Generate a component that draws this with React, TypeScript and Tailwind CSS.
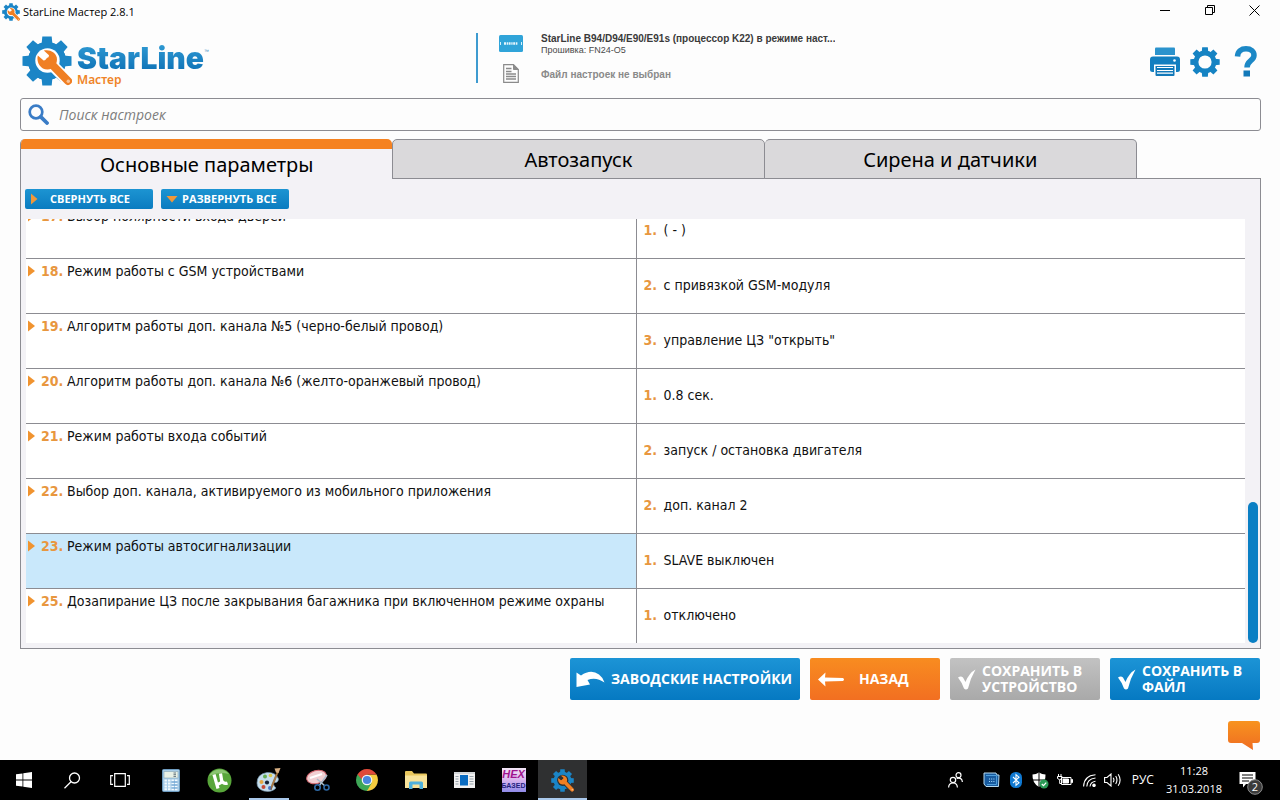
import React from 'react';

const TABS = ['Основные параметры', 'Автозапуск', 'Сирена и датчики'];

type Setting = { id: number; name: string; option: number; value: string; selected?: boolean };

const SETTINGS: Setting[] = [
  { id: 17, name: 'Выбор полярности входа дверей', option: 1, value: '( - )' },
  { id: 18, name: 'Режим работы с GSM устройствами', option: 2, value: 'с привязкой GSM-модуля' },
  { id: 19, name: 'Алгоритм работы доп. канала №5 (черно-белый провод)', option: 3, value: 'управление ЦЗ "открыть"' },
  { id: 20, name: 'Алгоритм работы доп. канала №6 (желто-оранжевый провод)', option: 1, value: '0.8 сек.' },
  { id: 21, name: 'Режим работы входа событий', option: 2, value: 'запуск / остановка двигателя' },
  { id: 22, name: 'Выбор доп. канала, активируемого из мобильного приложения', option: 2, value: 'доп. канал 2' },
  { id: 23, name: 'Режим работы автосигнализации', option: 1, value: 'SLAVE выключен', selected: true },
  { id: 25, name: 'Дозапирание ЦЗ после закрывания багажника при включенном режиме охраны', option: 1, value: 'отключено' },
];

const TEETH = [0, 45, 90, 135, 180, 225, 270, 315];

function GearShape({ fill, hole }: { fill: string; hole: number }) {
  const ring = (19 + hole) / 2;
  return (
    <g>
      <circle cx="25" cy="25" r={ring} fill="none" stroke={fill} strokeWidth={19 - hole} />
      {TEETH.map((a) => (
        <path key={a} d="M19.5 9 L20.3 0.5 H29.7 L30.5 9 Z" fill={fill} transform={`rotate(${a} 25 25)`} />
      ))}
    </g>
  );
}

function LogoGear({ className, backing }: { className: string; backing: string }) {
  return (
    <svg viewBox="0 0 50 50" className={className} aria-hidden="true">
      <defs>
        <linearGradient id="logoBlue" x1="0" y1="0" x2="0" y2="50" gradientUnits="userSpaceOnUse">
          <stop offset="0" stopColor="#2f9ad3" />
          <stop offset="1" stopColor="#0a70b5" />
        </linearGradient>
      </defs>
      <circle cx="25" cy="25" r="19" fill="#1b85c6" />
      <GearShape fill="#1b85c6" hole={11} />
      <circle cx="25.5" cy="24.5" r="12.2" fill={backing} />
      <path d="M30 29 L47 46" stroke={backing} strokeWidth="11.5" strokeLinecap="round" />
      <path d="M27 25.5 L46 45" stroke="#f07f23" strokeWidth="8" strokeLinecap="round" />
      <path
        d="M15.8 19.5 L21.6 24.6 L26 23.6 L27 19.2 L21.8 14.6 C27.5 13 33.5 16.2 34.8 21.5 C36 27.5 31.5 33.6 25.4 33.6 C19 33.6 14 27 15.8 19.5 Z"
        fill="#f07f23"
      />
      <circle cx="46.3" cy="45.3" r="1.7" fill="#f9c396" />
    </svg>
  );
}

function TitleBar() {
  return (
    <header className="flex h-6 shrink-0 items-center pr-[3px] pl-[2px]">
      <LogoGear className="size-[18px]" backing="#ffffff" />
      <h1 className="ml-[3px] font-['Open_Sans',sans-serif] text-[11px] text-black">StarLine Мастер 2.8.1</h1>
      <div className="ml-auto flex h-full text-black">
        <button type="button" aria-label="Свернуть" className="flex w-[45px] items-center justify-center pb-1">
          <svg width="10" height="10" viewBox="0 0 10 10"><path d="M0 5.5H10" stroke="currentColor" /></svg>
        </button>
        <button type="button" aria-label="Восстановить" className="flex w-[45px] items-center justify-center pb-1">
          <svg width="10" height="10" viewBox="0 0 10 10" fill="none" stroke="currentColor">
            <path d="M0.5 2.5H7.5V9.5H0.5ZM2.5 2.5V0.5H9.5V7.5H7.5" />
          </svg>
        </button>
        <button type="button" aria-label="Закрыть" className="flex w-[45px] items-center justify-center pb-1">
          <svg width="11" height="11" viewBox="0 0 11 11"><path d="M0.5 0.5L10.5 10.5M10.5 0.5L0.5 10.5" stroke="currentColor" /></svg>
        </button>
      </div>
    </header>
  );
}

function AppHeader() {
  return (
    <div className="flex h-[74px] shrink-0 items-start pr-[22px] pl-[22px]">
      <div className="flex w-[454px] shrink-0 items-start pt-3">
        <LogoGear className="size-[50px]" backing="#ffffff" />
        <div className="ml-[5px] pt-2">
          <div className="flex items-start">
            <span className="bg-linear-to-b from-[#2f9ad3] to-[#0a70b5] bg-clip-text font-[Inter,sans-serif] text-[30px] leading-[29px] font-black text-transparent">
              StarLine
            </span>
            <span className="font-['Liberation_Sans',sans-serif] text-[5px] leading-[14px] text-[#2f86bd]">™</span>
          </div>
          <div className="font-['Noto_Sans',sans-serif] text-xs leading-[14px] font-semibold text-[#ef8428]">Мастер</div>
        </div>
      </div>
      <div className="mt-[9px] flex h-[50px] min-w-0 border-l-2 border-[#3e9bd0] pl-[21px] font-['Liberation_Sans',sans-serif] text-[10px]">
        <div className="flex w-[42px] shrink-0 flex-col pt-[2px]">
          <svg width="24" height="17" viewBox="0 0 24 17" aria-hidden="true">
            <rect width="24" height="17" rx="1.5" fill="#30a4d9" />
            <path d="M1.500 7V10M22.500 7V10" stroke="#d9f1fb" />
            <path d="M5 8.500H19" stroke="#e6f6fd" strokeWidth="2.400" strokeDasharray="2 0.700 1.300 0.600" />
          </svg>
          <svg width="16" height="19" viewBox="0 0 16 19" className="mt-3 ml-1" fill="none" stroke="#8b8b8b" aria-hidden="true">
            <path d="M0.700 0.700H10.500L15.300 5.500V18.300H0.700Z" strokeWidth="1.200" />
            <path d="M10.500 0.700V5.500H15.300Z" fill="#8b8b8b" />
            <path d="M3 4.500H8.500M3 7.500H8.500M3 10H13M3 12.500H13M3 15H13" strokeWidth="1.300" />
          </svg>
        </div>
        <div className="min-w-0">
          <p className="truncate leading-3 font-bold text-[#3a3a3a]">StarLine B94/D94/E90/E91s (процессор K22) в режиме наст...</p>
          <p className="text-[9px] leading-[10px] text-[#4a4a4a]">Прошивка: FN24-O5</p>
          <p className="mt-[14px] leading-3 font-bold text-[#8a8a8a]">Файл настроек не выбран</p>
        </div>
      </div>
      <div className="ml-auto flex gap-[10px] pt-[22px]">
        <button type="button" aria-label="Печать">
          <svg width="30" height="30" viewBox="0 0 30 30" aria-hidden="true">
            <path d="M5 1.500Q5 0.500 6 0.500H24Q25 0.500 25 1.500V8H5Z" fill="#2b93cd" />
            <path d="M3 9.500H27Q30 9.500 30 12.500V22.500Q30 25 27.500 25H26V17.500H4V25H2.500Q0 25 0 22.500V12.500Q0 9.500 3 9.500Z" fill="#137fc0" />
            <path d="M5.500 19H24.500V28Q24.500 29 23.500 29H6.500Q5.500 29 5.500 28Z" fill="#1279b9" />
            <path d="M7 20.500H23M7 23.500H23M7 26.200H23" stroke="#fff" strokeWidth="1.200" />
            <circle cx="24.500" cy="13.500" r="1.300" fill="#fff" />
          </svg>
        </button>
        <button type="button" aria-label="Настройки">
          <svg width="30" height="30" viewBox="0 0 50 50" aria-hidden="true">
            <GearShape fill="#1583c3" hole={11} />
          </svg>
        </button>
        <button type="button" aria-label="Справка" className="ml-1">
          <svg width="24" height="31" viewBox="0 0 24 31" aria-hidden="true">
            <path d="M3.500 10.500C3.800 5 7.500 2.800 12 2.800C17 2.800 20 5.500 20 9.200C20 15 13 14.500 13 21.500" fill="none" stroke="#1c88c6" strokeWidth="5.500" />
            <rect x="9.500" y="24.500" width="6.500" height="6" fill="#1279b9" />
          </svg>
        </button>
      </div>
    </div>
  );
}

function SearchBox() {
  return (
    <div className="flex h-[33px] shrink-0 items-center rounded-[3px] border border-[#8c8c92] pl-[7px]">
      <label htmlFor="settings-search" aria-label="Поиск настроек">
        <svg width="21" height="21" viewBox="0 0 21 21" fill="none" stroke="#3a7cc6" aria-hidden="true">
          <circle cx="8" cy="8" r="6.300" strokeWidth="2.700" />
          <path d="M12.800 12.800L19 19" strokeWidth="3.800" strokeLinecap="round" />
        </svg>
      </label>
      <input
        id="settings-search"
        type="text"
        placeholder="Поиск настроек"
        className="ml-[10px] h-full flex-1 bg-transparent font-['Open_Sans',sans-serif] text-sm italic outline-none placeholder:text-[#7d7d7d]"
      />
    </div>
  );
}

function Tabs() {
  return (
    <div role="tablist" className="relative z-10 -mb-px flex h-10 shrink-0 font-['Noto_Sans',sans-serif] text-xl text-black">
      {TABS.map((tab, i) =>
        i === 0 ? (
          <button key={tab} type="button" role="tab" aria-selected="true" className="flex w-[30%] flex-col overflow-hidden rounded-t-[5px] border-l border-[#8c8c92] bg-[#f3f2f6]">
            <span className="h-[10px] w-full shrink-0 bg-[#f58220]" />
            <span className="w-full leading-8">{tab}</span>
          </button>
        ) : (
          <button
            key={tab}
            type="button"
            role="tab"
            aria-selected="false"
            className={`w-[30%] rounded-t-[5px] border border-[#8c8c92] bg-[#dad9db] pt-px ${i === 2 ? 'border-l-0' : ''}`}
          >
            {tab}
          </button>
        ),
      )}
    </div>
  );
}

function Toolbar() {
  const button =
    "flex h-5 w-32 items-center rounded-[2px] bg-linear-to-b from-[#1c94d2] to-[#0a7cc0] pl-[5px] font-['Open_Sans',sans-serif] text-[11px] font-bold text-white";
  return (
    <div className="flex h-10 shrink-0 items-center gap-2 pl-1">
      <button type="button" className={button}>
        <svg width="8" height="12" viewBox="0 0 8 12" aria-hidden="true"><path d="M1 0.500L7.500 6L1 11.500Z" fill="#f0983a" /></svg>
        <span className="ml-3">СВЕРНУТЬ ВСЕ</span>
      </button>
      <button type="button" className={button}>
        <svg width="12" height="8" viewBox="0 0 12 8" aria-hidden="true"><path d="M0.500 1L6 7.500L11.500 1Z" fill="#f0983a" /></svg>
        <span className="ml-1">РАЗВЕРНУТЬ ВСЕ</span>
      </button>
    </div>
  );
}

function SettingsTable() {
  return (
    <div className="flex min-h-0 flex-1 pl-[5px]">
      <div className="flex min-w-0 flex-1 flex-col justify-end overflow-hidden bg-white">
        <table className="w-full shrink-0 table-fixed border-separate border-spacing-0 font-['DejaVu_Sans_Condensed','DejaVu_Sans',sans-serif] text-sm text-[#111]">
          <tbody>
            {SETTINGS.map((s, i) => {
              const line = i < SETTINGS.length - 1 ? 'h-[55px] border-b' : 'h-[54px]';
              return (
                <tr key={s.id}>
                  <td className={`${line} w-1/2 border-[#8c8c92] p-0 align-top ${s.selected ? 'bg-[#c9e8fb]' : ''}`}>
                    <div className="flex items-center pt-[2px] pl-[1px] leading-5 whitespace-nowrap">
                      <button type="button" aria-label={`Развернуть пункт ${s.id}`}>
                        <svg width="9" height="12" viewBox="0 0 9 12" aria-hidden="true"><path d="M1 0.500L8 6L1 11.500Z" fill="#f0932f" /></svg>
                      </button>
                      <b className="ml-[5px] w-[26px] text-[#e8973f]">{s.id}.</b>
                      <span>{s.name}</span>
                    </div>
                  </td>
                  <td className={`${line} border-l border-[#8c8c92] p-0 pb-[2px] pl-[7px] align-middle whitespace-nowrap`}>
                    <div className="flex items-center leading-5">
                      <b className="w-5 text-[#e8973f]">{s.option}.</b>
                      <span>{s.value}</span>
                    </div>
                  </td>
                </tr>
              );
            })}
          </tbody>
        </table>
      </div>
      <div className="flex w-[15px] shrink-0 flex-col justify-end pr-[2px] pl-[3px]">
        <div className="h-1/3 w-full rounded-[5px] bg-[#0a7fc4]" />
      </div>
    </div>
  );
}

function CheckMark() {
  return (
    <svg width="18" height="21" viewBox="0 0 18 21" className="shrink-0" aria-hidden="true">
      <path d="M0 8.500Q3 6.500 5 8.500L7.500 13Q11 4 17.500 0.500Q12.500 9 10 19.500Q8 21.500 6 19.500Q4 13.500 0 8.500Z" fill="#fff" />
    </svg>
  );
}

function Actions() {
  const base = "flex h-[42px] items-center rounded-[2px] text-left font-['Open_Sans',sans-serif] text-sm leading-4 font-bold text-white";
  const blue = 'bg-linear-to-b from-[#1c94d6] to-[#0579c2]';
  return (
    <div className="mt-[9px] flex shrink-0 justify-end gap-[10px] pr-px">
      <button type="button" className={`${base} ${blue} w-[230px] pl-[6px]`}>
        <svg width="29" height="17" viewBox="0 0 29 17" className="shrink-0" aria-hidden="true">
          <path d="M0.500 1.500L5 4.500Q15 -2.500 23 3.500Q27 6.500 28.500 11.500Q20 5.500 11.500 9L14 13.500L0.500 16Z" fill="#fff" />
        </svg>
        <span className="ml-[6px]">ЗАВОДСКИЕ НАСТРОЙКИ</span>
      </button>
      <button type="button" className={`${base} w-[130px] bg-linear-to-b from-[#f88c20] to-[#f26f21] pl-2`}>
        <svg width="27" height="15" viewBox="0 0 27 15" aria-hidden="true">
          <path d="M0 7.500L7.500 0.500L7 5.500L25 6Q27 7.500 25 9L7 9.500L7.500 14.500Z" fill="#fff" />
        </svg>
        <span className="ml-[14px]">НАЗАД</span>
      </button>
      <button type="button" disabled className={`${base} w-[150px] bg-linear-to-b from-[#c2c2c2] to-[#a9a9a9] pl-2`}>
        <CheckMark />
        <span className="ml-[6px]">СОХРАНИТЬ В УСТРОЙСТВО</span>
      </button>
      <button type="button" className={`${base} ${blue} w-[150px] pl-2`}>
        <CheckMark />
        <span className="ml-[6px]">СОХРАНИТЬ В ФАЙЛ</span>
      </button>
    </div>
  );
}

type TaskItemProps = { label: string; system?: boolean; active?: boolean; running?: boolean; children: React.ReactNode };

function TaskItem({ label, system, active, running, children }: TaskItemProps) {
  return (
    <button
      type="button"
      aria-label={label}
      className={`flex flex-col items-center ${system ? 'w-12' : 'w-[49px]'} ${active ? 'bg-[#2f3031]' : ''}`}
    >
      <span className="flex flex-1 items-center pt-[2px]">{children}</span>
      <span className={`h-[2px] ${active ? 'w-full bg-[#a9c8ea]' : running ? 'w-10 bg-[#a9c8ea]' : 'w-full'}`} />
    </button>
  );
}

function Taskbar() {
  return (
    <footer className="flex h-10 shrink-0 bg-black text-white">
      <div className="mr-[2px] flex">
        <TaskItem label="Пуск" system>
          <svg width="16" height="16" viewBox="0 0 16 16" fill="#fff"><path d="M0 2.300L6.500 1.400V7.600H0ZM7.300 1.300L16 0V7.600H7.300ZM0 8.400H6.500V14.600L0 13.700ZM7.300 8.400H16V16L7.300 14.700Z" /></svg>
        </TaskItem>
        <TaskItem label="Поиск" system>
          <svg width="17" height="17" viewBox="0 0 17 17" fill="none" stroke="#fff" strokeWidth="1.300"><circle cx="10.500" cy="6" r="5" /><path d="M7 9.800L0.500 16.300" /></svg>
        </TaskItem>
        <TaskItem label="Представление задач" system>
          <svg width="20" height="14" viewBox="0 0 20 14" fill="none" stroke="#fff" strokeWidth="1.200"><path d="M4.700 0.600H15.300V13.400H4.700ZM3 2.600H0.700V11.400H3M17 2.600H19.300V11.400H17" /></svg>
        </TaskItem>
      </div>
      <TaskItem label="Калькулятор">
        <svg width="18" height="23" viewBox="0 0 18 23">
          <rect x="0.500" y="0.500" width="17" height="22" rx="1" fill="#a9cde8" stroke="#6e9cc0" />
          <rect x="2" y="2.500" width="14" height="6.500" fill="#e9f1e6" stroke="#87a5b5" strokeWidth="0.600" />
          <path d="M11.500 4H14M11.500 5.700H14M11.500 7.400H14" stroke="#456" strokeWidth="0.800" />
          <path d="M2.500 11.500H15.500M2.500 14.500H15.500M2.500 17.500H15.500M2.500 20.300H15.500" stroke="#f4fbff" strokeWidth="1.900" strokeDasharray="2.400 1.100" />
          <path d="M9.500 13H15.500M9.500 16H15.500M9.500 19H15.500" stroke="#4d8cc5" strokeWidth="0.900" />
        </svg>
      </TaskItem>
      <TaskItem label="uTorrent">
        <svg width="25" height="25" viewBox="0 0 25 25">
          <circle cx="12.500" cy="12.500" r="12" fill="#58a63a" />
          <path d="M2 8A12 12 0 0 1 22 6Q12 3 2 8Z" fill="#8bc571" />
          <path d="M7 6.500L11 20.500M8.700 14.500Q12.500 17.500 14.800 13.500L13.500 5.500M14.500 12.500Q16.500 16.500 20.500 15" fill="none" stroke="#fff" strokeWidth="3.200" />
        </svg>
      </TaskItem>
      <TaskItem label="Paint" running>
        <svg width="25" height="25" viewBox="0 0 25 25">
          <path d="M1 15Q1 6 11 4.500Q20 4 22.500 11Q22 15 18.500 14.500Q16 16 20 20Q16 24.500 8 23Q1 21 1 15Z" fill="#c6deed" stroke="#7295ad" strokeWidth="0.700" />
          <circle cx="5.500" cy="14" r="2" fill="#e5a742" /><circle cx="9" cy="8.500" r="2" fill="#64ae54" /><circle cx="14.500" cy="7.500" r="1.800" fill="#ddc748" />
          <circle cx="7.500" cy="19" r="2" fill="#c64b37" /><circle cx="11" cy="14.500" r="2.100" fill="#142234" /><circle cx="14" cy="20" r="2" fill="#4c78c5" />
          <path d="M22.500 4L16.800 18L15 22L15.500 17.500L21 4Z" fill="#c08a49" stroke="#7f5227" strokeWidth="0.600" />
          <path d="M18.500 0.500L24.500 0L22.500 5L20 4.500Z" fill="#d9b185" />
        </svg>
      </TaskItem>
      <TaskItem label="Ножницы">
        <svg width="24" height="23" viewBox="0 0 24 23" fill="none">
          <ellipse cx="10.500" cy="8" rx="10" ry="6.500" transform="rotate(-15 10.500 8)" fill="#f1cfd2" stroke="#d66872" />
          <path d="M4 9L16 5" stroke="#fff" strokeWidth="2" />
          <path d="M21 6L13 17M11 10L19 17" stroke="#a9bdcc" strokeWidth="1.600" />
          <circle cx="11.500" cy="18.500" r="2.700" stroke="#2e69a5" strokeWidth="1.600" /><circle cx="20.500" cy="18.500" r="2.500" stroke="#2e69a5" strokeWidth="1.600" />
        </svg>
      </TaskItem>
      <TaskItem label="Google Chrome">
        <svg width="22" height="22" viewBox="0 0 22 22">
          <path d="M11 11L20.500 5.500A11 11 0 0 1 11 22Z" fill="#f6cc3f" />
          <path d="M11 11V22A11 11 0 0 1 1.500 5.500Z" fill="#3ea757" />
          <path d="M11 5.500H20.500L15.800 13.700ZM11 5.500V11H16Z" fill="#f6cc3f" />
          <path d="M6.200 13.700L11 22L15.800 13.700Z" fill="#3ea757" />
          <path d="M1.500 5.500L6.200 13.700L11 5.500Z" fill="#3ea757" />
          <path d="M1.500 5.500L6 10.500L11 5.500H20.500A11 11 0 0 0 1.500 5.500Z" fill="#e04a3a" />
          <circle cx="11" cy="11" r="5.300" fill="#f5f5f5" /><circle cx="11" cy="11" r="4.100" fill="#4a86e0" />
        </svg>
      </TaskItem>
      <TaskItem label="Проводник">
        <svg width="22" height="18" viewBox="0 0 22 18">
          <path d="M0 1Q0 0 1 0H7L9 2.500H21Q22 2.500 22 3.500V17H0Z" fill="#e9c75d" />
          <path d="M0 4.500H22V17H0Z" fill="#f8e39a" />
          <path d="M4 18V12Q4 10.500 5.500 10.500H16.500Q18 10.500 18 12V18H14.500V13.500H7.500V18Z" fill="#4fb1dc" />
        </svg>
      </TaskItem>
      <TaskItem label="Панель задач">
        <svg width="21" height="16" viewBox="0 0 21 16">
          <rect width="21" height="16" fill="#f1f1f1" /><rect x="6" y="3" width="8" height="10.500" fill="#0a6cc2" />
          <path d="M1.500 4.500H4.500M1.500 7H4.500M1.500 9.500H4.500M1.500 12H4.500M15.500 4.500H19.500M15.500 7H19.500M15.500 9.500H19.500M15.500 12H19.500" stroke="#8d9aa3" strokeWidth="0.900" />
          <path d="M0 1H21" stroke="#c8ccd0" strokeWidth="1.500" />
        </svg>
      </TaskItem>
      <TaskItem label="Hex">
        <span className="flex h-6 w-6 flex-col overflow-hidden bg-linear-to-b from-[#f3e6f7] via-[#d9b4ee] to-[#8f8ae8] text-center font-['Liberation_Sans',sans-serif] font-bold">
          <span className="text-[11px] leading-[13px] text-[#a1148e] italic">HEX</span>
          <span className="text-[7px] leading-[10px] text-[#22217e]">БАЗЕD</span>
        </span>
      </TaskItem>
      <TaskItem label="StarLine Мастер" active>
        <LogoGear className="size-[23px]" backing="#2f3031" />
      </TaskItem>
      <div className="ml-auto flex items-center">
        <svg width="15" height="16" viewBox="0 0 15 16" fill="none" stroke="#fff" strokeWidth="1.200" className="mr-5">
          <circle cx="5" cy="8" r="2.700" /><path d="M0.600 15.500Q0.800 11 5 11Q9.200 11 9.400 15.500" /><circle cx="10.500" cy="3.200" r="2.500" /><path d="M8.700 6.500Q14 5 14.400 10" />
        </svg>
        <svg width="17" height="16" viewBox="0 0 17 16" className="mr-[10px]">
          <path d="M1 1H13L14 3H16L15.500 14.500H3L1 12Z" fill="#175a9e" stroke="#b7d9ee" /><path d="M3 3.500H13.500V12.500H4" fill="none" stroke="#4d9edc" />
          <path d="M6 7H12M6 9.500H12" stroke="#a9dcff" strokeDasharray="1 1.200" />
        </svg>
        <svg width="12" height="16" viewBox="0 0 12 16" className="mr-[10px]">
          <rect width="12" height="16" rx="5.500" fill="#0f78d0" /><path d="M3 5L9 10.800L6 13.300V2.700L9 5.200L3 11" fill="none" stroke="#fff" strokeWidth="1.100" />
        </svg>
        <svg width="17" height="17" viewBox="0 0 17 17" className="mr-2">
          <path d="M7 0.500Q10 2.500 13.500 2.500Q14 11 7 15Q0 11 0.500 2.500Q4 2.500 7 0.500Z" fill="#fff" /><path d="M7 0.500V15M0.500 8H13.500" stroke="#000" />
          <circle cx="12" cy="12" r="4.500" fill="#2b9a56" /><path d="M9.800 12L11.500 13.700L14.200 10.600" fill="none" stroke="#fff" strokeWidth="1.200" />
        </svg>
        <svg width="16" height="12" viewBox="0 0 16 12" fill="none" stroke="#fff" className="mr-[10px]">
          <path d="M4.500 3.500H14V10.500H4.500Z" /><path d="M6 5H11.500V9H6ZM14.500 5.500H15.500V8.500H14.500Z" fill="#fff" /><path d="M1.500 0V2.500M4 0V2.500M0.500 2.500H5V4.500Q2.700 7 0.500 4.500ZM2.700 6V9.500H4.500" />
        </svg>
        <svg width="13" height="13" viewBox="0 0 13 13" fill="none" stroke="#fff" strokeWidth="1.100" className="mr-2">
          <path d="M0.600 12.500Q1 1.500 12.500 0.700M3.800 12.500Q4 5 12.500 4M7 12.500Q7.500 8 12.500 7.300" /><circle cx="11" cy="11.300" r="1.200" fill="#fff" />
        </svg>
        <svg width="18" height="14" viewBox="0 0 18 14" fill="none" stroke="#fff" strokeWidth="1.100" className="mr-[10px]">
          <path d="M0.600 4.500H3L7 1V13L3 9.500H0.600ZM9.200 4.800Q10.700 7 9.200 9.200M11.700 3Q14.200 7 11.700 11M14.200 1.200Q18 7 14.200 12.800" />
        </svg>
        <button type="button" className="font-['Open_Sans',sans-serif] text-xs">РУС</button>
        <time className="ml-3 text-center font-['Open_Sans',sans-serif] text-[11px] leading-[18px]">
          11:28<br />31.03.2018
        </time>
        <button type="button" aria-label="Уведомления" className="mr-[17px] ml-[17px] pt-1">
          <svg width="24" height="25" viewBox="0 0 24 25">
            <path d="M0.500 2H16.500V14H7L4 17.500V14H0.500Z" fill="#fff" /><path d="M3 5H14M3 8H14M3 11H10" stroke="#000" strokeWidth="1.200" />
            <circle cx="16" cy="17" r="7.300" fill="#3b3b3b" stroke="#8d8d8d" />
            <text x="16" y="21" textAnchor="middle" fontSize="11" fontFamily="Open Sans, sans-serif" fill="#fff">2</text>
          </svg>
        </button>
      </div>
    </footer>
  );
}

export default function App() {
  return (
    <div className="flex h-screen flex-col overflow-hidden bg-[#fdfdfd]">
      <TitleBar />
      <AppHeader />
      <main className="flex min-h-0 flex-1 flex-col pr-[19px] pl-5">
        <SearchBox />
        <div className="mt-2 flex min-h-0 flex-1 flex-col">
          <Tabs />
          <section className="flex min-h-0 flex-1 flex-col border border-[#8c8c92] bg-[#f3f2f6] pb-[5px]">
            <Toolbar />
            <SettingsTable />
          </section>
        </div>
        <Actions />
        <div className="flex h-[60px] shrink-0 justify-end pt-[21px] pr-px">
          <button type="button" aria-label="Обратная связь" className="h-[30px]">
            <svg width="32" height="30" viewBox="0 0 32 30" aria-hidden="true">
              <defs>
                <linearGradient id="bubble" x1="0" y1="0" x2="0" y2="1">
                  <stop offset="0" stopColor="#f8931f" />
                  <stop offset="1" stopColor="#ef6d22" />
                </linearGradient>
              </defs>
              <path d="M3 0H29Q32 0 32 3V19Q32 22 29 22H24.500L25 29L14 22H3Q0 22 0 19V3Q0 0 3 0Z" fill="url(#bubble)" />
            </svg>
          </button>
        </div>
      </main>
      <Taskbar />
    </div>
  );
}
